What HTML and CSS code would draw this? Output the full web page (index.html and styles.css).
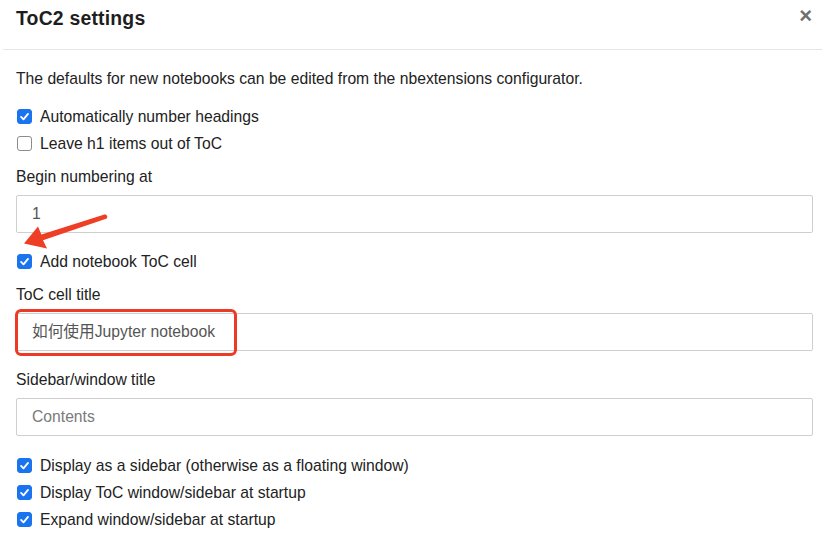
FILE: index.html
```html
<!DOCTYPE html>
<html>
<head>
<meta charset="utf-8">
<link rel="stylesheet" href="styles.css">
</head>
<body>
<div class="modal">
  <div class="modal-header">
    <h4 class="modal-title">ToC2 settings</h4>
    <span class="close">×</span>
  </div>
  <div class="modal-body">
    <p class="desc">The defaults for new notebooks can be edited from the nbextensions configurator.</p>
    <div class="checks">
      <label class="check"><span class="box on"><svg viewBox="0 0 14 14"><path d="M3.3 7.4 L5.9 10 L10.8 4.2" /></svg></span>Automatically number headings</label>
      <label class="check"><span class="box"></span>Leave h1 items out of ToC</label>
    </div>
    <div class="group">
      <div class="label">Begin numbering at</div>
      <div class="input">1</div>
    </div>
    <div class="checks single">
      <label class="check"><span class="box on"><svg viewBox="0 0 14 14"><path d="M3.3 7.4 L5.9 10 L10.8 4.2" /></svg></span>Add notebook ToC cell</label>
    </div>
    <div class="group">
      <div class="label">ToC cell title</div>
      <div class="input-wrap">
        <div class="input">如何使用Jupyter notebook</div>
        <div class="highlight"></div>
      </div>
    </div>
    <div class="group group-last">
      <div class="label">Sidebar/window title</div>
      <div class="input placeholder">Contents</div>
    </div>
    <div class="checks">
      <label class="check"><span class="box on"><svg viewBox="0 0 14 14"><path d="M3.3 7.4 L5.9 10 L10.8 4.2" /></svg></span>Display as a sidebar (otherwise as a floating window)</label>
      <label class="check"><span class="box on"><svg viewBox="0 0 14 14"><path d="M3.3 7.4 L5.9 10 L10.8 4.2" /></svg></span>Display ToC window/sidebar at startup</label>
      <label class="check"><span class="box on"><svg viewBox="0 0 14 14"><path d="M3.3 7.4 L5.9 10 L10.8 4.2" /></svg></span>Expand window/sidebar at startup</label>
    </div>
  </div>
  <svg class="arrow" width="825" height="552" viewBox="0 0 825 552">
    <polygon points="24,243.5 38,226.5 41.4,234.6 105.2,214.2 107.4,216 106.8,218.4 43,240.2 47,248.5" fill="#ee3e25"/>
  </svg>
</div>
</body>
</html>
```

FILE: styles.css
```css
* { box-sizing: border-box; }
html, body { margin: 0; padding: 0; background: #fff; }
body {
  width: 825px;
  height: 552px;
  overflow: hidden;
  font-family: "Liberation Sans", Arial, "Noto Sans CJK SC", sans-serif;
  font-size: 15.7px;
  color: #222;
}
.modal {
  position: relative;
  margin: 0 3px;
  height: 552px;
}
.modal-header {
  height: 50px;
  border-bottom: 1px solid #e6e6e6;
  display: flex;
  justify-content: space-between;
  align-items: flex-start;
  padding: 6px 10px 0 13px;
}
.modal-title {
  margin: 0;
  font-size: 19.4px;
  font-weight: bold;
  line-height: 24px;
  color: #1e1e1e;
  letter-spacing: 0.2px;
}
.close {
  font-size: 22px;
  font-weight: bold;
  line-height: 20px;
  color: #707070;
  margin-top: 0;
}
.modal-body {
  padding: 19px 9px 0 13px;
}
.desc {
  margin: 0 0 14px;
  line-height: 20px;
}
.checks {
  display: flex;
  flex-direction: column;
}
.checks.single { margin-top: 15px; }
.check {
  display: flex;
  align-items: center;
  height: 27px;
  line-height: 27px;
}
.box {
  width: 15px;
  height: 15px;
  margin-left: 1px;
  margin-right: 8px;
  border: 1px solid #8c8c8c;
  border-radius: 3px;
  background: #fff;
  flex: none;
  display: flex;
  align-items: center;
  justify-content: center;
}
.box.on {
  background: #1b74ef;
  border-color: #1b74ef;
}
.box svg {
  width: 13px;
  height: 13px;
}
.box svg path {
  fill: none;
  stroke: #fff;
  stroke-width: 2;
  stroke-linecap: round;
  stroke-linejoin: round;
}
.group { margin-top: 10px; }
.group-last { margin-top: 19px; margin-bottom: 16px; }
.label {
  line-height: 20px;
  margin-bottom: 8px;
}
.input-wrap { position: relative; }
.input {
  height: 38px;
  border: 1px solid #cfcfcf;
  border-radius: 2px;
  padding: 0 15px;
  line-height: 36px;
  color: #555;
}
.input.placeholder { color: #7a7a7a; }
.highlight {
  position: absolute;
  left: -1px;
  top: -4px;
  width: 222px;
  height: 47px;
  border: 3px solid #ec3a24;
  border-radius: 6px;
}
.arrow {
  position: absolute;
  left: -3px;
  top: 0;
  pointer-events: none;
}
```
